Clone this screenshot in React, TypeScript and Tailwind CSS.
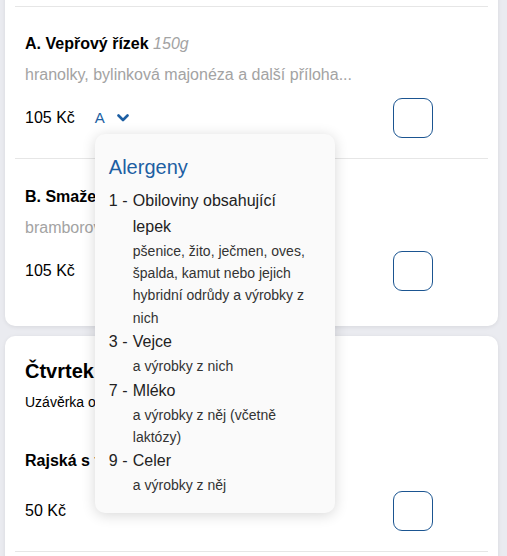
import React from "react";

const BLUE = "text-[#1d5fa3]";

function Checkbox() {
  return (
    <div className="w-[40px] h-[40px] rounded-[9px] border-[1.5px] border-[#1b5591] bg-white shrink-0" />
  );
}

function Chevron() {
  return (
    <svg width="12" height="8" viewBox="0 0 12 8" className="block">
      <path d="M1.5 1.5 L6 6 L10.5 1.5" fill="none" stroke="#1d5fa3" strokeWidth="2.6" strokeLinecap="round" strokeLinejoin="round" />
    </svg>
  );
}

const allergens = [
  { n: "1", name: "Obiloviny obsahující lepek", sub: "pšenice, žito, ječmen, oves, špalda, kamut nebo jejich hybridní odrůdy a výrobky z nich" },
  { n: "3", name: "Vejce", sub: "a výrobky z nich" },
  { n: "7", name: "Mléko", sub: "a výrobky z něj (včetně laktózy)" },
  { n: "9", name: "Celer", sub: "a výrobky z něj" },
];

function Popup() {
  return (
    <div className="absolute left-0 top-[28px] z-20 w-[240px] rounded-[10px] bg-[#fafafa] shadow-[0_2px_14px_rgba(0,0,0,0.16)] pl-[14px] pr-[22px] pt-[19px] pb-[16px]">
      <div className={`text-[20px] leading-[28px] ${BLUE} mb-[6.5px]`}>Alergeny</div>
      {allergens.map((a) => (
        <div key={a.n} className="flex text-[#222]">
          <div className="w-[24px] shrink-0 text-[16px] leading-[26px] whitespace-nowrap">{a.n} -</div>
          <div className="flex-1 min-w-0">
            <div className="text-[16px] leading-[26px]">{a.name}</div>
            <div className="text-[14px] leading-[22.4px] text-[#333]">{a.sub}</div>
          </div>
        </div>
      ))}
    </div>
  );
}

function Item({
  title,
  weight,
  desc,
  price,
  popup,
  pt,
}: {
  title: string;
  weight?: string;
  desc?: string;
  price: string;
  popup?: boolean;
  pt: string;
}) {
  return (
    <div className={`px-[10px] pb-[20px] ${pt}`}>
      <div className="text-[16px] leading-[20px] whitespace-nowrap">
        <span className="font-bold text-black">{title}</span>
        {weight && <span className="italic text-[#a3a3a3]"> {weight}</span>}
      </div>
      {desc && (
        <div className="mt-[11px] text-[16px] leading-[20px] text-[#a3a3a3] whitespace-nowrap">{desc}</div>
      )}
      <div className={`${desc ? "mt-[13px]" : "mt-[20px]"} flex items-center justify-between pr-[45px]`}>
        <div className="flex items-center">
          <span className="text-[16px] leading-[20px] text-black">{price}</span>
          {popup && (
            <div className="relative ml-[20px] h-[24px] flex items-center gap-[12px]">
              <span className={`text-[15px] leading-[20px] ${BLUE}`}>A</span>
              <Chevron />
              <Popup />
            </div>
          )}
        </div>
        <Checkbox />
      </div>
    </div>
  );
}

export default function App() {
  return (
    <div className="min-h-[556px] h-[556px] overflow-hidden bg-[#eaebf0] font-['Liberation_Sans',Arial,sans-serif]">
      <div className="ml-[5px] w-[493px] -mt-[20px] rounded-[10px] bg-white px-[10px] pt-[26px] pb-[15px] shadow-[0_1px_4px_rgba(0,0,0,0.08)] relative z-10">
        <div className="h-px bg-[#e6e6e6]" />
        <Item
          title="A. Vepřový řízek"
          weight="150g"
          desc="hranolky, bylinková majonéza a další příloha..."
          price="105 Kč"
          popup
          pt="pt-[27px]"
        />
        <div className="h-px bg-[#e6e6e6]" />
        <Item
          title="B. Smažený sýr"
          weight="120g"
          desc="bramborová kaše, tatarská"
          price="105 Kč"
          pt="pt-[28px]"
        />
      </div>
      <div className="ml-[5px] mt-[10px] w-[493px] rounded-[10px] bg-white px-[10px] pt-[21px] shadow-[0_1px_4px_rgba(0,0,0,0.08)]">
        <div className="px-[10px]">
          <div className="text-[20px] leading-[28px] font-bold text-black">Čtvrtek</div>
          <div className="mt-[7px] text-[14px] leading-[20px] text-black">Uzávěrka objednávek</div>
        </div>
        <Item title="Rajská s těstovinami" price="50 Kč" pt="pt-[38.5px]" />
        <div className="h-px bg-[#e6e6e6]" />
        <div className="h-[40px]" />
      </div>
    </div>
  );
}
